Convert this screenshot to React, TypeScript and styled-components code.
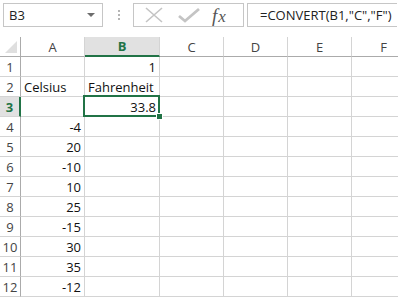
import styled, { createGlobalStyle, css } from "styled-components";

const GlobalStyle = createGlobalStyle`
  html, body {
    margin: 0;
    padding: 0;
    background: #ffffff;
    overflow: hidden;
  }
  body {
    font-family: "Open Sans", "Liberation Sans", sans-serif;
  }
`;

const COLUMNS = ["A", "B", "C", "D", "E", "F"];
const COL_WIDTHS = [64, 75, 64, 64, 64, 64];

const COL_A: (string | number)[] = ["", "Celsius", "", -4, 20, -10, 10, 25, -15, 30, 35, -12];
const COL_B: (string | number)[] = [1, "Fahrenheit", 33.8, "", "", "", "", "", "", "", "", ""];

const GREEN = "#217346";

export default function App() {
  return (
    <>
      <GlobalStyle />
      <St.Page>
        <St.FormulaBar>
          <St.NameBox>
            <span>B3</span>
            <St.DropArrow />
          </St.NameBox>
          <St.Grip>
            <i />
            <i />
            <i />
          </St.Grip>
          <St.ButtonBox>
            <St.IconBtn>
              <svg width="20" height="16" viewBox="0 0 20 16">
                <path d="M2 1 L18 15 M18 1 L2 15" stroke="#c4c4c4" strokeWidth="1.6" fill="none" />
              </svg>
            </St.IconBtn>
            <St.IconBtn>
              <svg width="22" height="16" viewBox="0 0 22 16">
                <path d="M1 9 L7 14 L21 2" stroke="#c4c4c4" strokeWidth="2.8" fill="none" />
              </svg>
            </St.IconBtn>
            <St.Fx>
              f<span>x</span>
            </St.Fx>
          </St.ButtonBox>
          <St.FormulaBox>=CONVERT(B1,"C","F")</St.FormulaBox>
        </St.FormulaBar>

        <St.Sheet>
          <St.Corner>
            <svg width="12" height="12" viewBox="0 0 12 12">
              <path d="M12 0 L12 12 L0 12 Z" fill="#dfdfdf" />
            </svg>
          </St.Corner>
          {COLUMNS.map((c) => (
            <St.ColHeader key={c} $active={c === "B"}>
              {c}
            </St.ColHeader>
          ))}

          {COL_A.map((a, i) => (
            <RowCells key={i} row={i + 1} a={a} b={COL_B[i]} />
          ))}
        </St.Sheet>
      </St.Page>
    </>
  );
}

function RowCells({ row, a, b }: { row: number; a: string | number; b: string | number }) {
  const active = row === 3;
  return (
    <>
      <St.RowHeader $active={active}>{row}</St.RowHeader>
      <St.Cell $num={typeof a === "number"}>{a}</St.Cell>
      <St.Cell $num={typeof b === "number"} $selected={active}>
        {b}
      </St.Cell>
      <St.Cell />
      <St.Cell />
      <St.Cell />
      <St.Cell />
    </>
  );
}

const St = {
  Page: styled.div`
    width: 398px;
    height: 300px;
    overflow: hidden;
  `,

  FormulaBar: styled.div`
    display: flex;
    align-items: center;
    height: 24px;
    padding: 3px 1px 0 3px;
  `,

  NameBox: styled.div`
    display: flex;
    align-items: center;
    justify-content: space-between;
    box-sizing: border-box;
    width: 100px;
    height: 24px;
    padding: 0 7px 0 5px;
    border: 1px solid #c6c6c6;
    font-size: 13px;
    color: #222;
  `,

  DropArrow: styled.span`
    width: 0;
    height: 0;
    border-left: 4px solid transparent;
    border-right: 4px solid transparent;
    border-top: 4px solid #6d6d6d;
  `,

  Grip: styled.div`
    display: flex;
    flex-direction: column;
    gap: 2px;
    margin: 0 13px 0 15px;

    i {
      display: block;
      width: 2px;
      height: 2px;
      background: #b5b5b5;
    }
  `,

  ButtonBox: styled.div`
    display: flex;
    align-items: center;
    box-sizing: border-box;
    width: 111px;
    height: 24px;
    padding: 0 0 0 9px;
    border: 1px solid #c6c6c6;
  `,

  IconBtn: styled.div`
    display: flex;
    align-items: center;
    justify-content: center;
    width: 22px;
    margin-right: 13px;
  `,

  Fx: styled.div`
    font-family: "Liberation Serif", "DejaVu Serif", serif;
    font-style: italic;
    font-size: 19px;
    color: #555;
    line-height: 1;
    margin-left: -1px;

    span {
      font-size: 17px;
      margin-left: 1px;
    }
  `,

  FormulaBox: styled.div`
    display: flex;
    align-items: center;
    box-sizing: border-box;
    flex: 1;
    height: 24px;
    margin-left: 3px;
    padding-left: 12px;
    border: 1px solid #c6c6c6;
    border-right: none;
    font-size: 13px;
    color: #222;
    white-space: nowrap;
  `,

  Sheet: styled.div`
    display: grid;
    grid-template-columns: 21px ${COL_WIDTHS.map((w) => `${w}px`).join(" ")};
    grid-auto-rows: 20px;
    margin-top: 10px;
    font-size: 13px;
  `,

  Corner: styled.div`
    display: flex;
    align-items: flex-end;
    justify-content: flex-end;
    box-sizing: border-box;
    padding: 0 3px 3px 0;
    border-right: 1px solid #ababab;
    border-bottom: 1px solid #ababab;
  `,

  ColHeader: styled.div<{ $active?: boolean }>`
    display: flex;
    align-items: center;
    justify-content: center;
    box-sizing: border-box;
    border-right: 1px solid #d4d4d4;
    border-bottom: 1px solid #ababab;
    color: #444;
    font-size: 13px;

    ${({ $active }) =>
      $active &&
      css`
        background: #e1e1e1;
        color: ${GREEN};
        font-weight: 700;
        border-bottom: 2px solid ${GREEN};
      `}
  `,

  RowHeader: styled.div<{ $active?: boolean }>`
    display: flex;
    align-items: center;
    justify-content: center;
    box-sizing: border-box;
    border-right: 1px solid #ababab;
    border-bottom: 1px solid #d4d4d4;
    color: #444;
    font-size: 13px;

    ${({ $active }) =>
      $active &&
      css`
        background: #e1e1e1;
        color: ${GREEN};
        font-weight: 700;
        border-right: 2px solid ${GREEN};
      `}
  `,

  Cell: styled.div<{ $num?: boolean; $selected?: boolean }>`
    position: relative;
    display: flex;
    align-items: center;
    justify-content: ${({ $num }) => ($num ? "flex-end" : "flex-start")};
    box-sizing: border-box;
    padding: 0 3px;
    border-right: 1px solid #d4d4d4;
    border-bottom: 1px solid #d4d4d4;
    color: #111;
    white-space: nowrap;

    ${({ $selected }) =>
      $selected &&
      css`
        z-index: 2;

        &::before {
          content: "";
          position: absolute;
          left: -2px;
          top: -2px;
          right: -1px;
          bottom: -1px;
          border: 2px solid ${GREEN};
          pointer-events: none;
        }
        &::after {
          content: "";
          position: absolute;
          right: -4px;
          bottom: -4px;
          width: 5px;
          height: 5px;
          background: ${GREEN};
          border: 1px solid #fff;
        }
      `}
  `,
};
